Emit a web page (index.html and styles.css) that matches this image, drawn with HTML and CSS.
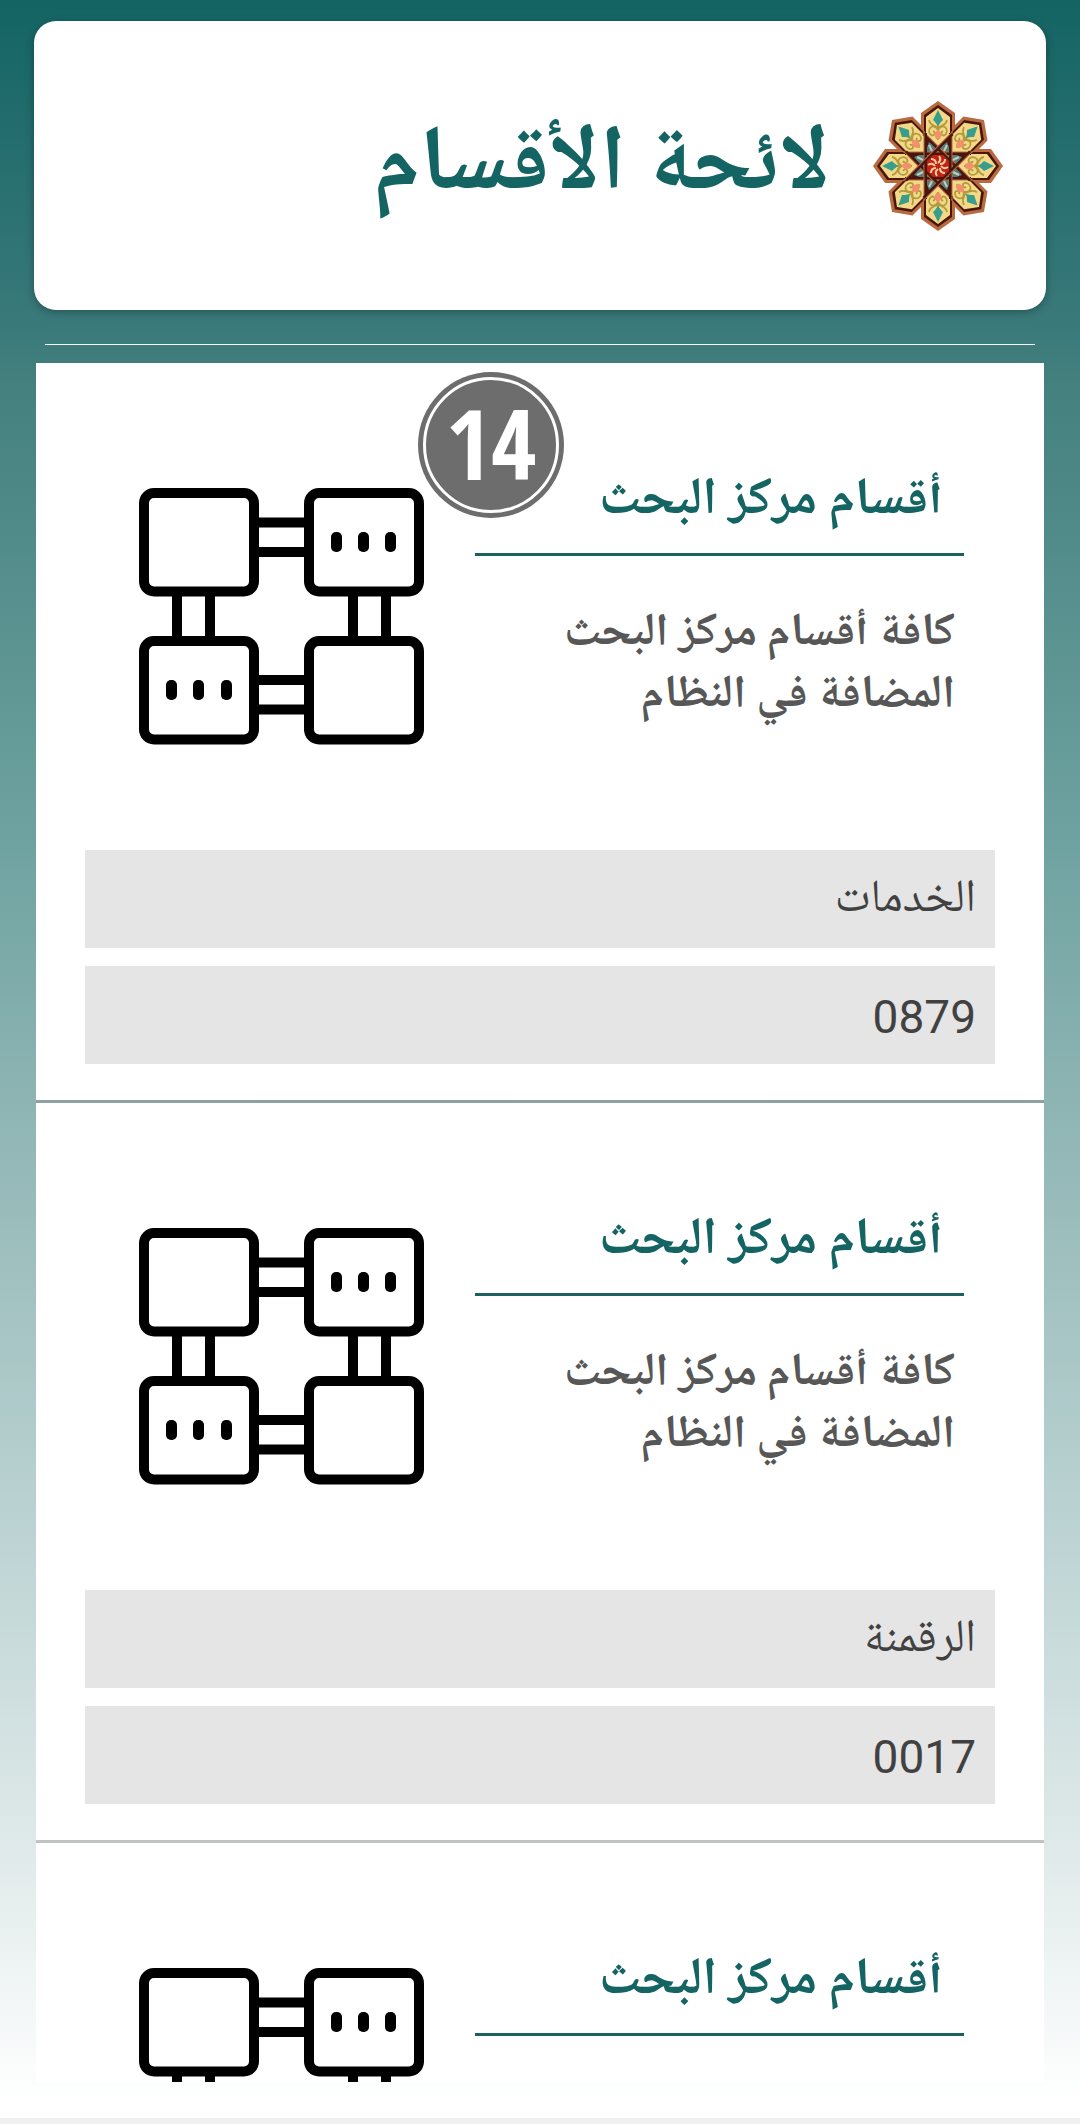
FILE: index.html
```html
<!DOCTYPE html>
<html lang="ar" dir="rtl">
<head>
<meta charset="utf-8">
<meta name="viewport" content="width=device-width, initial-scale=1">
<title>لائحة الأقسام</title>
<link rel="stylesheet" href="styles.css">
</head>
<body>
<svg class="defs" aria-hidden="true">
  <defs>
    <symbol id="network" viewBox="0 0 285 257">
      <g fill="none" stroke="#000" stroke-width="10">
        <path d="M115 34.500H170M115 64H170M115 192H170M115 221.500H170M38 104V152M71 104V152M214 104V152M247 104V152"/>
        <rect x="5" y="5" width="110" height="98.500" rx="10"/>
        <rect x="170" y="5" width="110" height="98.500" rx="10"/>
        <rect x="5" y="153" width="110" height="98.500" rx="10"/>
        <rect x="170" y="153" width="110" height="98.500" rx="10"/>
      </g>
      <g>
        <rect x="192" y="44" width="11" height="20" rx="5"/>
        <rect x="219" y="44" width="11" height="20" rx="5"/>
        <rect x="246" y="44" width="11" height="20" rx="5"/>
        <rect x="27" y="192" width="11" height="20" rx="5"/>
        <rect x="54" y="192" width="11" height="20" rx="5"/>
        <rect x="82" y="192" width="11" height="20" rx="5"/>
      </g>
    </symbol>
    <path id="petal-edge" d="M0-65L17-53V-40L0 0L-17-40V-53Z"/>
    <g id="petal">
      <path fill="#4a160c" d="M0-61L14-51V-33L0 0L-14-33V-51Z"/>
      <path fill="#f3d987" d="M0-58L12-49V-28L0-18L-12-28V-49Z"/>
      <path fill="none" stroke="#b39a3c" stroke-width="1.800" d="M0-54V-26M0-36C-5-44-11-37-8-32C-5-28-1-33-5-35M0-36C5-44 11-37 8-32C5-28 1-33 5-35M-9-46C-8-40-3-41 0-38C3-41 8-40 9-46"/>
      <path fill="#379e8d" d="M0-56L3-50L5-46L3-44L0-40L-3-44L-5-46L-3-50Z"/>
      <path fill="#f0906c" d="M0-37L4-32L2-27H-2L-4-32Z"/>
    </g>
    <g id="beam">
      <path stroke="#4a160c" stroke-width="3" d="M-33-12.500H33M-33 12.500H33"/>
      <path stroke="#b86b40" stroke-width="1" d="M-35-14H35M-35 14H35"/>
    </g>
  </defs>
</svg>

<header class="header">
  <svg class="logo" viewBox="-66 -66 132 132" role="img" aria-label="شعار">
    <g fill="#b86b40">
      <use href="#petal-edge"/><use href="#petal-edge" transform="rotate(45)"/><use href="#petal-edge" transform="rotate(90)"/><use href="#petal-edge" transform="rotate(135)"/><use href="#petal-edge" transform="rotate(180)"/><use href="#petal-edge" transform="rotate(225)"/><use href="#petal-edge" transform="rotate(270)"/><use href="#petal-edge" transform="rotate(315)"/>
    </g>
    <use href="#petal"/><use href="#petal" transform="rotate(45)"/><use href="#petal" transform="rotate(90)"/><use href="#petal" transform="rotate(135)"/><use href="#petal" transform="rotate(180)"/><use href="#petal" transform="rotate(225)"/><use href="#petal" transform="rotate(270)"/><use href="#petal" transform="rotate(315)"/>
    <path fill="#547d83" d="M-9-24L0-18L9-24L13-13L24-9L18 0L24 9L13 13L9 24L0 18L-9 24L-13 13L-24 9L-18 0L-24-9L-13-13Z"/>
    <path stroke="#c3cfae" stroke-width="2" d="M-9-21L-6-15M9-21L6-15M21-9L15-6M21 9L15 6M9 21L6 15M-9 21L-6 15M-21 9L-15 6M-21-9L-15-6"/>
    <use href="#beam"/><use href="#beam" transform="rotate(45)"/><use href="#beam" transform="rotate(90)"/><use href="#beam" transform="rotate(135)"/>
    <path fill="#c22119" d="M-5-11H5L11-5V5L5 11H-5L-11 5V-5Z"/>
    <g fill="none" stroke="#f5cf94" stroke-width="2">
      <path d="M0-3Q4-6 1-10M0 3Q-4 6-1 10M3 0Q6 4 10 1M-3 0Q-6-4-10-1M2-2Q7-2 7-7M-2 2Q-7 2-7 7M2 2Q2 7 7 7M-2-2Q-2-7-7-7"/>
    </g>
  </svg>
  <h1 class="page-title">لائحة الأقسام</h1>
</header>
<hr class="rule">

<main class="list">
  <article class="card">
    <span class="badge"><span class="badge-ring">14</span></span>
    <div class="summary">
      <div class="about">
        <h2 class="card-title">أقسام مركز البحث</h2>
        <p class="card-text">كافة أقسام مركز البحث المضافة في النظام</p>
      </div>
      <svg class="card-icon" aria-hidden="true"><use href="#network"/></svg>
    </div>
    <p class="field">الخدمات</p>
    <p class="field number">0879</p>
  </article>
  <article class="card">
    <div class="summary">
      <div class="about">
        <h2 class="card-title">أقسام مركز البحث</h2>
        <p class="card-text">كافة أقسام مركز البحث المضافة في النظام</p>
      </div>
      <svg class="card-icon" aria-hidden="true"><use href="#network"/></svg>
    </div>
    <p class="field">الرقمنة</p>
    <p class="field number">0017</p>
  </article>
  <article class="card">
    <div class="summary">
      <div class="about">
        <h2 class="card-title">أقسام مركز البحث</h2>
      </div>
      <svg class="card-icon" aria-hidden="true"><use href="#network"/></svg>
    </div>
  </article>
</main>
</body>
</html>
```
FILE: styles.css
```css
* {
  box-sizing: border-box;
}

body {
  display: flex;
  flex-direction: column;
  height: 100vh;
  margin: 0;
  padding: 21px 36px 36px;
  border-bottom: 6px solid #f0f0f0;
  background: linear-gradient(#146464 0%, #39797a 15%, #43807e 18%, #6fa3a1 40%, #90b6b5 53%, #c1d6d6 74%, #e2ebeb 88%, #fff 99%);
  font-family: "Noto Naskh Arabic UI", "Noto Naskh Arabic", "Noto Sans Arabic", Roboto, "DejaVu Sans", sans-serif;
  color: #414141;
}

h1, h2, p {
  margin: 0;
}

.defs {
  position: absolute;
  width: 0;
  height: 0;
}

.header {
  display: flex;
  flex: none;
  align-items: center;
  gap: 42px;
  height: 289px;
  margin: 0 -2px;
  padding: 0 42px;
  border-radius: 22px;
  background: #fff;
  box-shadow: 0 2px 8px rgba(0, 0, 0, 0.3);
}

.logo {
  width: 132px;
  height: 132px;
}

.page-title {
  font-size: 92px;
  line-height: 98px;
  color: #146464;
}

.rule {
  flex: none;
  width: calc(100% - 18px);
  height: 1px;
  margin: 34px auto 18px;
  border: 0;
  background: #fff;
}

.list {
  flex: 1;
  min-height: 0;
  overflow: auto;
  scrollbar-width: none;
}

.card {
  position: relative;
  padding: 90px 49px 36px;
  border-bottom: 3px solid rgba(135, 125, 125, 0.35);
  background: #fff;
  background-clip: padding-box;
}

.badge {
  position: absolute;
  top: 9px;
  left: 382px;
  z-index: 1;
  width: 146px;
  height: 146px;
  padding: 5px;
  border-radius: 50%;
  background: #6d6d6d;
}

.badge-ring {
  display: flex;
  align-items: center;
  justify-content: center;
  height: 100%;
  padding-bottom: 6px;
  border: 3px solid #fff;
  border-radius: 50%;
  font: bold 98px/120px "Liberation Sans Narrow", "Open Sans Condensed", "Roboto Condensed", Roboto, sans-serif;
  color: #fff;
}

.summary {
  display: flex;
  gap: 51px;
  height: 397px;
  padding: 0 31px 0 54px;
}

.about {
  flex: 1;
}

.card-title {
  height: 103px;
  padding: 17px 21px 0;
  border-bottom: 3px solid #1c6160;
  font-size: 52px;
  line-height: 60px;
  color: #146464;
}

.card-text {
  padding: 46px 9px 0;
  font-size: 46px;
  font-weight: bold;
  line-height: 62px;
  color: #575757;
}

.card-icon {
  flex: none;
  width: 285px;
  height: 257px;
  margin-top: 35px;
}

.field {
  height: 98px;
  padding: 0 19px;
  background: #e5e5e5;
  font-size: 46px;
  line-height: 98px;
}

.field + .field {
  margin-top: 18px;
}

.number {
  font-family: Roboto, sans-serif;
  font-size: 46px;
  line-height: 102px;
}
```
